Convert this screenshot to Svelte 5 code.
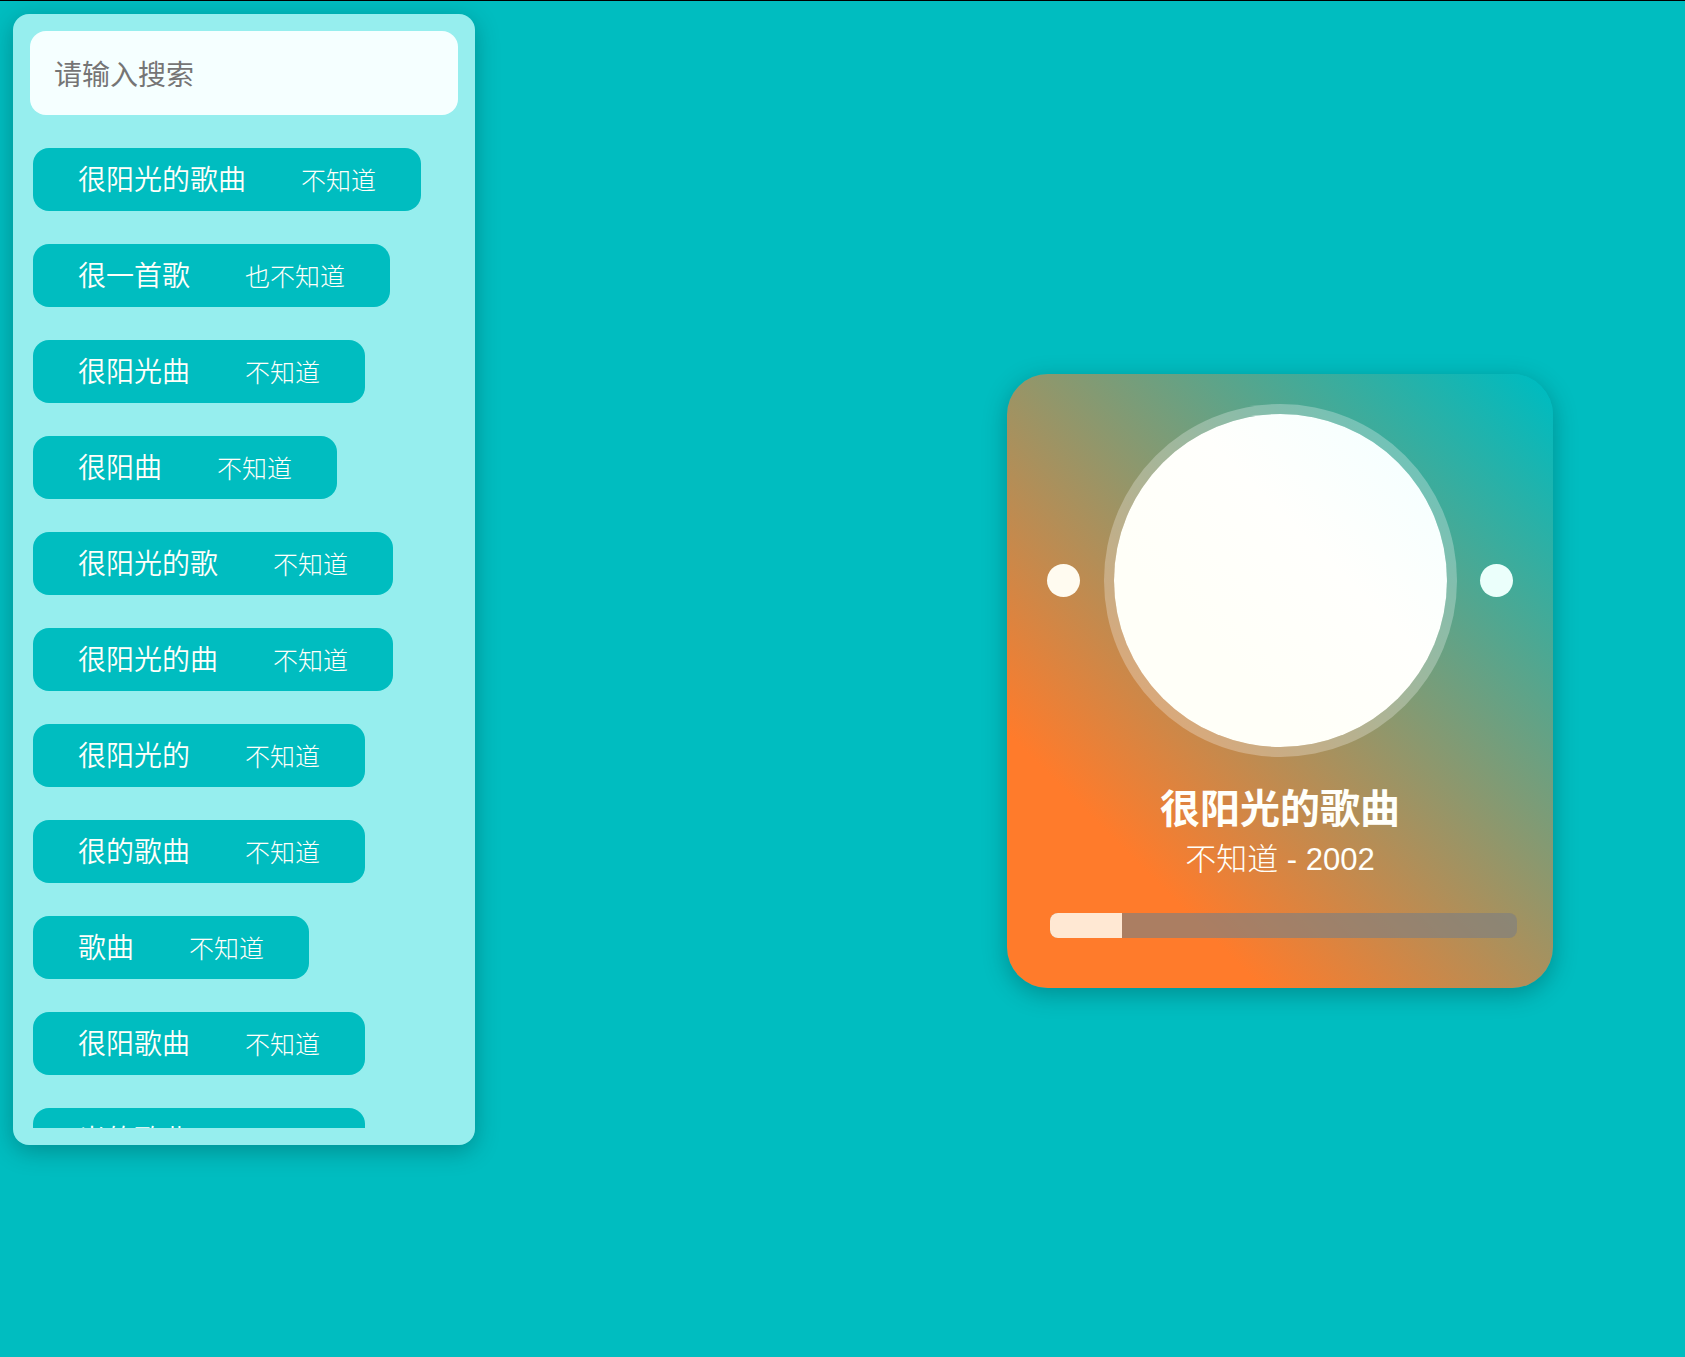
<script>
  const songs = [
    { title: '很阳光的歌曲', artist: '不知道' },
    { title: '很一首歌', artist: '也不知道' },
    { title: '很阳光曲', artist: '不知道' },
    { title: '很阳曲', artist: '不知道' },
    { title: '很阳光的歌', artist: '不知道' },
    { title: '很阳光的曲', artist: '不知道' },
    { title: '很阳光的', artist: '不知道' },
    { title: '很的歌曲', artist: '不知道' },
    { title: '歌曲', artist: '不知道' },
    { title: '很阳歌曲', artist: '不知道' },
    { title: '光的歌曲', artist: '不知道' }
  ];
  let query = $state('');
  let current = $state(0);
  const progress = 15.4;
  const shown = $derived(
    songs.map((s, i) => ({ ...s, i })).filter((s) => s.title.includes(query) || s.artist.includes(query))
  );
  function step(n) {
    current = (current + n + songs.length) % songs.length;
  }
</script>

<main class="page">
  <aside class="panel">
    <input class="search" type="text" placeholder="请输入搜索" aria-label="请输入搜索" bind:value={query} />
    <ul class="songs">
      {#each shown as song (song.i)}
        <li>
          <button class="song" onclick={() => (current = song.i)}>
            <span class="title">{song.title}</span>
            <span class="artist">{song.artist}</span>
          </button>
        </li>
      {/each}
    </ul>
  </aside>

  <div class="stage">
    <section class="player">
      <div class="deck">
        <button class="dot prev" aria-label="上一首" onclick={() => step(-1)}></button>
        <div class="disc"></div>
        <button class="dot next" aria-label="下一首" onclick={() => step(1)}></button>
      </div>
      <h1>{songs[current].title}</h1>
      <p>{songs[current].artist} - 2002</p>
      <div class="track" role="progressbar" aria-label="播放进度" aria-valuenow={progress} aria-valuemin="0" aria-valuemax="100">
        <div class="fill" style:width="{progress}%"></div>
      </div>
    </section>
  </div>
</main>

<style>
  :global(body) {
    background: #00bdc0;
  }
  .page {
    box-sizing: border-box;
    height: 100vh;
    display: flex;
    align-items: flex-start;
    padding: 13px 0 10px 13px;
    border-top: 1px solid #000;
    overflow: hidden;
    font-family: 'Liberation Sans', 'Noto Sans CJK SC', sans-serif;
    color: #fffffa;
  }
  .panel {
    box-sizing: border-box;
    flex: none;
    width: 462px;
    height: 90%;
    max-height: 1131px;
    display: flex;
    flex-direction: column;
    padding: 17px;
    border-radius: 16px;
    background: #96eeee;
    box-shadow: 0 6px 24px rgba(0, 0, 0, 0.25);
  }
  .search {
    box-sizing: border-box;
    flex: none;
    width: 100%;
    height: 84px;
    padding: 6px 24px 0;
    border: 0;
    border-radius: 16px;
    outline: none;
    background: #f5ffff;
    color: #333;
    font: 400 28px 'Liberation Sans', 'Noto Sans CJK SC', sans-serif;
  }
  .search::placeholder {
    color: #757575;
  }
  .songs {
    flex: 1;
    min-height: 0;
    margin: 0;
    padding: 33px 3px 0;
    list-style: none;
    overflow: hidden;
    display: flex;
    flex-direction: column;
    gap: 33px;
  }
  .songs li {
    flex: none;
    display: flex;
  }
  .song {
    display: flex;
    align-items: center;
    gap: 55px;
    height: 63px;
    padding: 0 45px 4px;
    border: 0;
    border-radius: 16px;
    background: #00bdc0;
    color: inherit;
    font: 350 28px 'Liberation Sans', 'Noto Sans CJK SC', sans-serif;
    cursor: pointer;
  }
  .artist {
    padding-top: 2px;
    font-size: 25px;
    font-weight: 300;
  }
  .stage {
    flex: 1;
    align-self: stretch;
    display: grid;
    grid-template-columns: 1fr 546px 132px;
    align-items: center;
  }
  .player {
    grid-column: 2;
    box-sizing: border-box;
    padding: 30px 40px 50px;
    border-radius: 41px;
    background: linear-gradient(45deg, #ff7b2b 22%, #00bbbf 98%);
    box-shadow: 0 6px 24px rgba(0, 0, 0, 0.25);
    text-align: center;
  }
  .deck {
    display: flex;
    align-items: center;
    justify-content: space-between;
  }
  .dot {
    width: 33px;
    height: 33px;
    padding: 0;
    border: 0;
    border-radius: 50%;
    cursor: pointer;
  }
  .prev {
    background: #fffbf0;
  }
  .next {
    background: #ebfffb;
  }
  .disc {
    box-sizing: border-box;
    width: 353px;
    height: 353px;
    border: 10px solid rgba(255, 255, 255, 0.28);
    border-radius: 50%;
    background: linear-gradient(45deg, #fffff8 30%, #fffffc 60%, #f5ffff 90%) padding-box;
  }
  h1 {
    margin: 26px 0 0;
    font-size: 40px;
    line-height: 52px;
    font-weight: 700;
  }
  p {
    margin: 0;
    font-size: 31px;
    line-height: 50px;
    font-weight: 300;
  }
  .track {
    height: 25px;
    margin: 28px -4px 0 3px;
    border-radius: 8px;
    background: rgba(128, 128, 128, 0.66);
    overflow: hidden;
  }
  .fill {
    height: 100%;
    background: #ffe8d3;
  }
</style>
